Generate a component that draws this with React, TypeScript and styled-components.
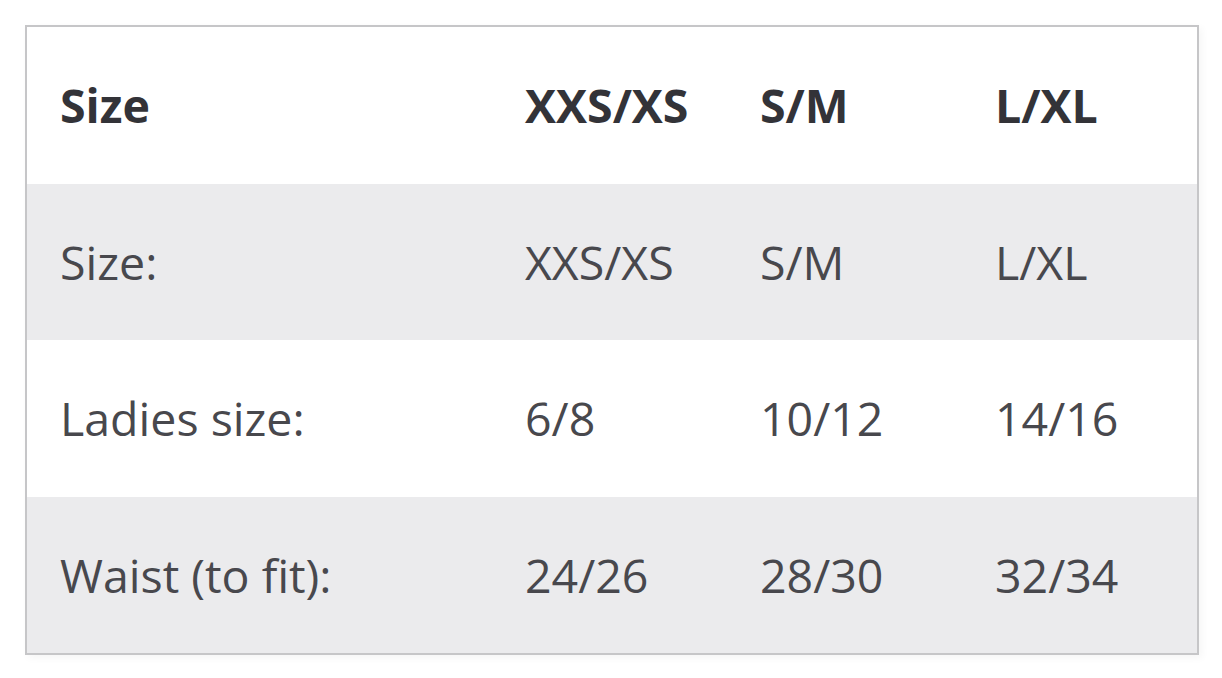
import React from 'react'
import styled, { createGlobalStyle } from 'styled-components'

const GlobalStyle = createGlobalStyle`
  html, body {
    margin: 0;
    padding: 0;
    background: #ffffff;
  }
  body {
    font-family: 'Open Sans', 'Noto Sans', sans-serif;
  }
`

const Page = styled.div`
  width: 1222px;
  height: 678px;
  padding: 25px 0 0 25px;
  box-sizing: border-box;
`

const Table = styled.table`
  width: 1174px;
  border: 2px solid #c6c6c8;
  border-collapse: separate;
  border-spacing: 0;
  table-layout: fixed;
  box-shadow: 3px 3px 8px rgba(0, 0, 0, 0.04);
`

const Row = styled.tr<{ $striped?: boolean }>`
  height: 156.5px;
  background: ${({ $striped }) => ($striped ? '#ebebed' : '#ffffff')};
`

const Cell = styled.td<{ $head?: boolean }>`
  padding: 0;
  font-size: 46.5px;
  font-weight: ${({ $head }) => ($head ? 700 : 400)};
  color: ${({ $head }) => ($head ? '#333338' : '#48484d')};
  vertical-align: middle;
  white-space: nowrap;

  &:first-child {
    padding-left: 33px;
  }
`

const columns = [498, 235, 235, 202]

const header = ['Size', 'XXS/XS', 'S/M', 'L/XL']

const rows = [
  ['Size:', 'XXS/XS', 'S/M', 'L/XL'],
  ['Ladies size:', '6/8', '10/12', '14/16'],
  ['Waist (to fit):', '24/26', '28/30', '32/34'],
]

const App = () => (
  <>
    <GlobalStyle />
    <Page>
      <Table>
        <colgroup>
          {columns.map((w, i) => (
            <col key={i} style={{ width: w }} />
          ))}
        </colgroup>
        <tbody>
          <Row>
            {header.map((h) => (
              <Cell key={h} $head>
                {h}
              </Cell>
            ))}
          </Row>
          {rows.map((r, i) => (
            <Row key={r[0]} $striped={i % 2 === 0}>
              {r.map((c, j) => (
                <Cell key={j}>{c}</Cell>
              ))}
            </Row>
          ))}
        </tbody>
      </Table>
    </Page>
  </>
)

export default App
